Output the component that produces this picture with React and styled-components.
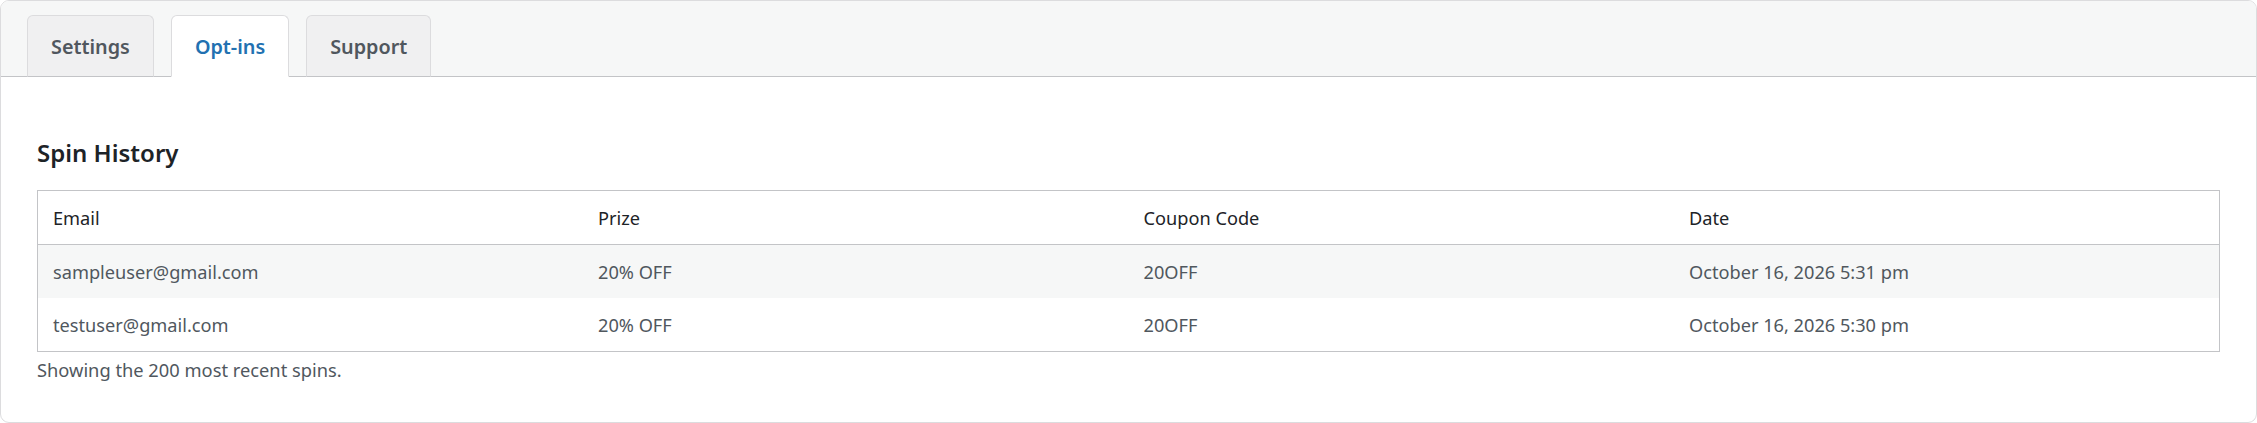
import React, { useState } from 'react'
import styled, { createGlobalStyle } from 'styled-components'

const GlobalStyle = createGlobalStyle`
    html, body {
        margin: 0;
        padding: 0;
        background: #ffffff;
    }
    body {
        font-family: "Noto Sans", "Open Sans", sans-serif;
        color: #50575e;
    }
    * {
        box-sizing: border-box;
    }
`

const tabs = ['Settings', 'Opt-ins', 'Support']

const spins = [
    { id: 1, email: 'sampleuser@gmail.com', prize: '20% OFF', code: '20OFF', date: 'October 16, 2026 5:31 pm' },
    { id: 2, email: 'testuser@gmail.com', prize: '20% OFF', code: '20OFF', date: 'October 16, 2026 5:30 pm' },
]

const App = () => {
    const [active, setActive] = useState('Opt-ins')

    return (
        <>
            <GlobalStyle />
            <Panel>
                <TabBar>
                    {tabs.map((tab) => (
                        <Tab key={tab} $active={tab === active} onClick={() => setActive(tab)}>
                            {tab}
                        </Tab>
                    ))}
                </TabBar>
                <Content>
                    <Title>Spin History</Title>
                    <HistoryTable>
                        <thead>
                            <tr>
                                <th>Email</th>
                                <th>Prize</th>
                                <th>Coupon Code</th>
                                <th>Date</th>
                            </tr>
                        </thead>
                        <tbody>
                            {spins.map((spin) => (
                                <tr key={spin.id}>
                                    <td>{spin.email}</td>
                                    <td>{spin.prize}</td>
                                    <td>{spin.code}</td>
                                    <td>{spin.date}</td>
                                </tr>
                            ))}
                        </tbody>
                    </HistoryTable>
                    <Note>Showing the 200 most recent spins.</Note>
                </Content>
            </Panel>
        </>
    )
}

const Panel = styled.div`
    height: 100vh;
    background: #ffffff;
    border: 1px solid #dcdcde;
    border-radius: 9px;
    overflow: hidden;
`

const TabBar = styled.nav`
    display: flex;
    align-items: flex-end;
    gap: 17px;
    height: 76px;
    padding-left: 26px;
    background: #f6f7f7;
    border-bottom: 1px solid #c3c4c7;
`

const Tab = styled.button`
    font-family: inherit;
    font-size: 19.8px;
    font-weight: 600;
    line-height: 28px;
    height: 62px;
    margin-bottom: -1px;
    padding: 1px 23px 0;
    border: 1px solid #dcdcde;
    border-bottom-color: ${(p) => (p.$active ? '#ffffff' : '#c3c4c7')};
    border-radius: 6px 6px 0 0;
    background: ${(p) => (p.$active ? '#ffffff' : '#f0f0f1')};
    color: ${(p) => (p.$active ? '#2271b1' : '#50575e')};
    cursor: pointer;
    text-align: center;
`

const Content = styled.section`
    padding: 60px 36px 0 36px;
`

const Title = styled.h2`
    margin: 0 0 21px;
    font-size: 24px;
    font-weight: 600;
    line-height: 32px;
    color: #1d2327;
`

const HistoryTable = styled.table`
    width: 100%;
    table-layout: fixed;
    border-collapse: collapse;
    border: 1px solid #c3c4c7;
    font-size: 18.2px;
    line-height: 25px;

    th, td {
        text-align: left;
        padding: 15px 15px 13px;
        height: 53px;
    }

    th {
        font-weight: 400;
        color: #1d2327;
        border-bottom: 1px solid #c3c4c7;
    }

    td {
        color: #50575e;
    }

    tbody tr:nth-child(odd) {
        background: #f6f7f7;
    }
`

const Note = styled.p`
    margin: 5px 0 0;
    font-size: 18.3px;
    line-height: 25px;
    color: #50575e;
`

export default App
